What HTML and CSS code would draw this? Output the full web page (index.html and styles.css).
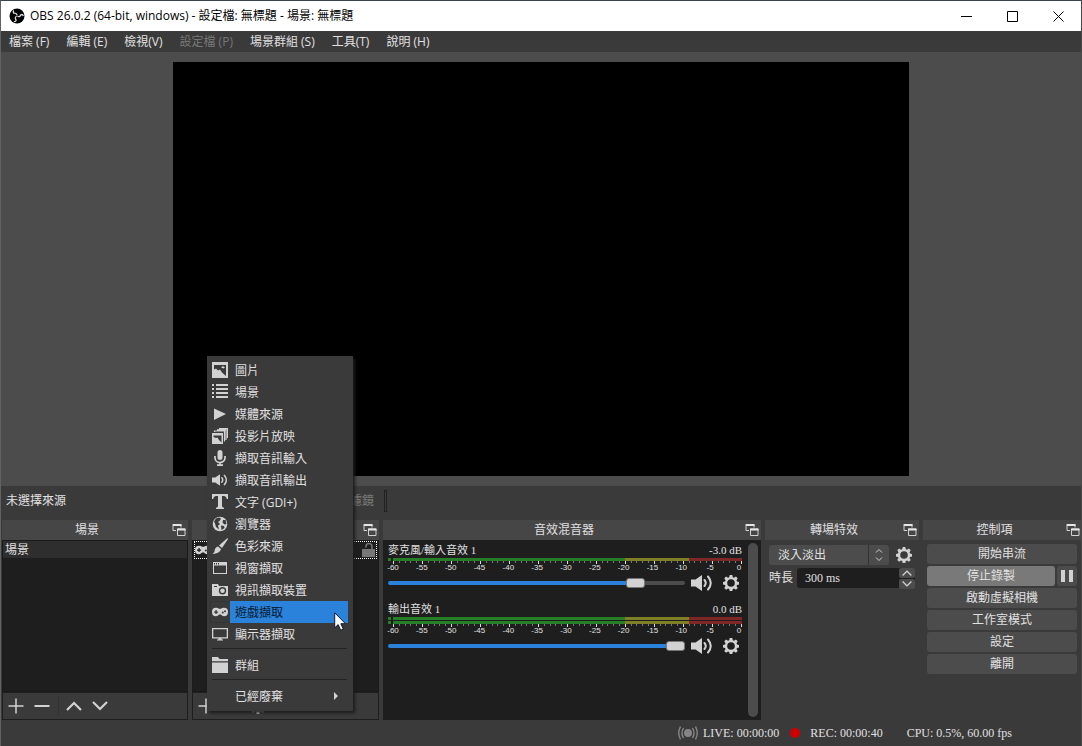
FILE: index.html
```html
<!DOCTYPE html>
<html lang="zh-Hant">
<head>
<meta charset="utf-8">
<title>OBS 26.0.2</title>
<link rel="stylesheet" href="styles.css">
</head>
<body>
<svg class="sprite" aria-hidden="true">
  <symbol id="popout" viewBox="0 0 14 14"><path d="M1 1.500h8v3M1 1v6.500h3M5.500 6h7.500v6.500H5.500z" fill="none" stroke="#d2d2d2"/><path d="M1 1h8.500v2H1zM5 5.500h8.500v2H5z" fill="#e6e6e6"/></symbol>
  <symbol id="gear" viewBox="0 0 16 16"><path fill-rule="evenodd" d="M6.700 0h2.600l.5 2.200 1.200.5 1.900-1.200 1.800 1.800-1.200 1.900.5 1.300 2 .4v2.500l-2 .5-.5 1.200 1.200 1.900-1.800 1.800-1.900-1.200-1.200.5-.5 2H6.700l-.5-2-1.200-.5-1.900 1.200-1.800-1.800 1.200-1.900-.5-1.200-2-.5V6.900l2-.4.5-1.300-1.200-1.900 1.800-1.800L5 2.700l1.200-.5zM8 4.200a3.800 3.800 0 1 0 0 7.600 3.800 3.800 0 0 0 0-7.600z"/></symbol>
  <symbol id="speaker" viewBox="0 0 22 16"><path d="M0 4.500h4.500L11 0v16l-6.500-4.500H0z"/><path d="M13.500 5q2.500 3 0 6M17 1.500q5.500 6.500 0 13" fill="none" stroke="#d2d2d2" stroke-width="2" stroke-linecap="round"/></symbol>
  <symbol id="pad" viewBox="0 0 16 16"><path fill-rule="evenodd" d="M4 3.800q2 0 3 1h2q1-1 3-1a4 4.200 0 0 1 0 8.400q-2 0-3-1.700H7q-1 1.700-3 1.700a4 4.200 0 0 1 0-8.400zM3.400 6v1.400H2v1.300h1.400v1.400h1.300V8.700h1.400V7.400H4.700V6z"/><circle cx="10.800" cy="8.600" r="1" fill="#3a3a3a"/><circle cx="13" cy="7.200" r="1" fill="#3a3a3a"/></symbol>
  <symbol id="plus" viewBox="0 0 16 16"><path d="M8 .5v15M.5 8h15" fill="none" stroke="#d2d2d2" stroke-width="1.500"/></symbol>
  <symbol id="minus" viewBox="0 0 16 16"><path d="M.5 8h15" fill="none" stroke="#d2d2d2" stroke-width="2"/></symbol>
  <symbol id="up" viewBox="0 0 16 16"><path d="M1 12l7-7 7 7" fill="none" stroke="#d2d2d2" stroke-width="2.200"/></symbol>
  <symbol id="down" viewBox="0 0 16 16"><path d="M1 4l7 7 7-7" fill="none" stroke="#d2d2d2" stroke-width="2.200"/></symbol>
</svg>

<div class="window">
  <header class="titlebar">
    <svg class="logo" viewBox="0 0 16 16"><circle cx="8" cy="8" r="7.500" fill="#000"/><g fill="none" stroke="#ddd" stroke-width="1.300"><path id="blade" d="M8 7.500C8 5.500 6.500 5 4.800 5.200 4 4.500 4 3.500 4.800 2.500"/><use href="#blade" transform="rotate(120 8 8)"/><use href="#blade" transform="rotate(240 8 8)"/></g></svg>
    <span class="title">OBS 26.0.2 (64-bit, windows) - 設定檔: 無標題 - 場景: 無標題</span>
    <button class="winbtn" aria-label="最小化"><svg viewBox="0 0 11 11"><path d="M0 5.500h11"/></svg></button>
    <button class="winbtn" aria-label="最大化"><svg viewBox="0 0 11 11"><path d="M.5.5h10v10H.5z"/></svg></button>
    <button class="winbtn" aria-label="關閉"><svg viewBox="0 0 11 11"><path d="M.5.5l10 10M10.500.5l-10 10"/></svg></button>
  </header>

  <nav class="menubar">
    <button>檔案 (F)</button><button>編輯 (E)</button><button>檢視(V)</button><button disabled>設定檔 (P)</button><button>場景群組 (S)</button><button>工具(T)</button><button>說明 (H)</button>
  </nav>

  <main class="preview"><div class="canvas"></div></main>

  <div class="context">
    <span class="none">未選擇來源</span>
    <button class="filter" disabled>濾鏡</button>
    <span class="grip"></span>
  </div>

  <div class="docks">
    <section class="dock scenes">
      <h2><span>場景</span><button class="pop" aria-label="浮動場景"><svg><use href="#popout"/></svg></button></h2>
      <div class="list"><button class="scene">場景</button></div>
      <div class="tools">
        <button aria-label="新增場景"><svg><use href="#plus"/></svg></button>
        <button aria-label="移除場景"><svg><use href="#minus"/></svg></button>
        <span class="bar"></span>
        <button aria-label="場景上移"><svg><use href="#up"/></svg></button>
        <button aria-label="場景下移"><svg><use href="#down"/></svg></button>
      </div>
    </section>

    <section class="dock sources">
      <h2><span></span><button class="pop" aria-label="浮動來源"><svg><use href="#popout"/></svg></button></h2>
      <div class="list">
        <div class="source">
          <svg class="kind" viewBox="0 0 16 16"><use href="#pad"/></svg>
          <svg class="eye" viewBox="0 0 16 16"><path d="M0 8q8-9 16 0-8 9-16 0z"/></svg>
          <svg class="lock" viewBox="0 0 14 14"><path d="M0 6h13v8H0z"/><path d="M4 4.500V3.500a3 3 0 0 1 6 0V7" fill="none" stroke="#777" stroke-width="1.500"/></svg>
        </div>
      </div>
      <div class="tools">
        <button aria-label="新增來源"><svg><use href="#plus"/></svg></button>
        <button aria-label="移除來源"><svg><use href="#minus"/></svg></button>
        <button aria-label="來源屬性"><svg viewBox="0 0 16 16"><use href="#gear"/></svg></button>
      </div>

      <div class="popup" role="menu">
        <button role="menuitem"><svg viewBox="0 0 16 16"><path d="M0 0h16v16H0z"/><path d="M2 3h12v11L10 10.500 8 7.500 6 8.500 4 6.500 2 7.500z" fill="#3a3a3a"/><path d="M9 5.500l2-1.500 2 1.500-1.500 1z"/></svg><span>圖片</span></button>
        <button role="menuitem"><svg viewBox="0 0 16 16"><path d="M0 0h2v2H0zM4 0h12v2H4zM0 4h2v2H0zM4 4h12v2H4zM0 8h2v2H0zM4 8h12v2H4zM0 12h2v2H0zM4 12h12v2H4z"/></svg><span>場景</span></button>
        <button role="menuitem"><svg viewBox="0 0 16 16"><path d="M2 2.500l12 5.500-12 6z"/></svg><span>媒體來源</span></button>
        <button role="menuitem"><svg viewBox="0 0 16 16"><path d="M0 5h11v11H0z"/><path d="M2.500 4V3h10v10H12M5 1.800h9V12M7 .6h8.500V10" fill="none" stroke="#d2d2d2" stroke-width="1.200"/><path d="M1.500 7.500h8v7L7 12l-1.500-2.500L4 10l-2.500-1z" fill="#3a3a3a"/></svg><span>投影片放映</span></button>
        <button role="menuitem"><svg viewBox="0 0 16 16"><rect x="5.500" y="0" width="5" height="10" rx="2.500"/><path d="M3 6v2a5 4.500 0 0 0 10 0V6M8 12v3M5 15.200h6" fill="none" stroke="#d2d2d2" stroke-width="1.700"/></svg><span>擷取音訊輸入</span></button>
        <button role="menuitem"><svg viewBox="0 0 22 16"><use href="#speaker"/></svg><span>擷取音訊輸出</span></button>
        <button role="menuitem"><svg viewBox="0 0 16 16"><path d="M0 0h16v5h-1.200q-.6-3-3-3H10v10q0 1.500 2 1.800V15H4v-1.200q2-.3 2-1.800V2H4.200q-2.400 0-3 3H0z"/></svg><span>文字 (GDI+)</span></button>
        <button role="menuitem"><svg viewBox="0 0 16 16"><circle cx="8" cy="8" r="7.300"/><path d="M7 1.500l2 1-1 2-2 1.500 2 2-2 1.500 1 4-3-2.500-1-3.500-1-2 2-3zM11 4l2.500 0 1 4-2 .5-2-2zM9 9.500l3 .5.5 2-3 2z" fill="#3a3a3a"/></svg><span>瀏覽器</span></button>
        <button role="menuitem"><svg viewBox="0 0 16 16"><path d="M15.500 0l.5 1-6 9-3-2.500zM6 8.500L9 11q-1 4.500-8.500 5Q3 14 3 11q1-2.500 3-2.500z"/></svg><span>色彩來源</span></button>
        <button role="menuitem"><svg viewBox="0 0 16 16"><path fill-rule="evenodd" d="M1 2h14v12H1zM2 5.500V13h12V5.500zM2 3v1.500h1V3zM4 3v1.500h1V3zM6 3v1.500h1V3z"/></svg><span>視窗擷取</span></button>
        <button role="menuitem"><svg viewBox="0 0 16 16"><path d="M0 2h6l1 2h9v10H0z"/><circle cx="10.500" cy="8.800" r="3" fill="none" stroke="#3a3a3a" stroke-width="1.400"/><path d="M2 4h3v1H2z" fill="#3a3a3a"/></svg><span>視訊擷取裝置</span></button>
        <button role="menuitem" class="active"><svg viewBox="0 0 16 16"><use href="#pad"/></svg><span>遊戲擷取</span>
          <svg class="cursor" viewBox="0 0 12 19"><path d="M.7.8v15l3.500-3.200L6.700 18.300l2.600-1.200-2.400-5.400h4.600z" fill="#fff" stroke="#101830"/></svg></button>
        <button role="menuitem"><svg viewBox="0 0 16 16"><path fill-rule="evenodd" d="M0 2h16v10.500H9.500V13.500H11v1H5v-1h1.500v-1H0zM1.300 3.300v7.900h13.400V3.300z"/></svg><span>顯示器擷取</span></button>
        <hr>
        <button role="menuitem"><svg viewBox="0 0 16 16"><path d="M0 0h6l1.500 2H16v2.200H0zM0 5.500h16V16H0z"/></svg><span>群組</span></button>
        <hr>
        <button role="menuitem"><svg></svg><span>已經廢棄</span><svg class="more" viewBox="0 0 4 8"><path d="M0 0l4 4-4 4z"/></svg></button>
      </div>
    </section>

    <section class="dock mixer">
      <h2><span>音效混音器</span><button class="pop" aria-label="浮動混音器"><svg><use href="#popout"/></svg></button></h2>
      <div class="list mixlist">
        <div class="channels">
          <div class="channel">
            <div class="name"><label for="mic">麥克風/輸入音效 1</label><span>-3.0 dB</span></div>
            <div class="meter"></div>
            <div class="ticks"></div><div class="scale"></div>
            <div class="fader"><input id="mic" type="range" min="0" max="1000" value="856" style="--fill:86%"><button aria-label="靜音"><svg class="spk" viewBox="0 0 22 16"><use href="#speaker"/></svg></button><button aria-label="音效設定"><svg class="cog" viewBox="0 0 16 16"><use href="#gear"/></svg></button></div>
          </div>
          <div class="channel">
            <div class="name"><label for="out">輸出音效 1</label><span>0.0 dB</span></div>
            <div class="meter"></div><div class="meter second"></div>
            <div class="ticks"></div><div class="scale"></div>
            <div class="fader"><input id="out" type="range" min="0" max="1000" value="1000" style="--fill:100%"><button aria-label="靜音"><svg class="spk" viewBox="0 0 22 16"><use href="#speaker"/></svg></button><button aria-label="音效設定"><svg class="cog" viewBox="0 0 16 16"><use href="#gear"/></svg></button></div>
          </div>
        </div>
        <div class="scroll"></div>
      </div>
    </section>

    <section class="dock transitions">
      <h2><span>轉場特效</span><button class="pop" aria-label="浮動轉場"><svg><use href="#popout"/></svg></button></h2>
      <div class="form">
        <div class="row">
          <div class="pick"><select aria-label="轉場特效"><option>淡入淡出</option></select><svg class="arrows" viewBox="0 0 8 12"><path d="M1 3.500l3-3 3 3M1 8.500l3 3 3-3"/></svg></div>
          <button class="plain" aria-label="轉場設定"><svg class="cog" viewBox="0 0 16 16"><use href="#gear"/></svg></button>
        </div>
        <div class="row duration">
          <label for="dur">時長</label>
          <div class="spin"><input id="dur" type="text" value="300 ms"><div class="steps"><button aria-label="增加"><svg viewBox="0 0 16 16"><use href="#up"/></svg></button><button aria-label="減少"><svg viewBox="0 0 16 16"><use href="#down"/></svg></button></div></div>
        </div>
      </div>
    </section>

    <section class="dock controls">
      <h2><span>控制項</span><button class="pop" aria-label="浮動控制項"><svg><use href="#popout"/></svg></button></h2>
      <div class="buttons">
        <button>開始串流</button>
        <div class="rec"><button class="on">停止錄製</button><button class="pause" aria-label="暫停錄製"><svg viewBox="0 0 12 12"><path d="M0 0h4v12H0zM8 0h4v12H8z"/></svg></button></div>
        <button>啟動虛擬相機</button>
        <button>工作室模式</button>
        <button>設定</button>
        <button>離開</button>
      </div>
    </section>
  </div>

  <footer class="status">
    <svg class="live" viewBox="0 0 20 14"><circle cx="10" cy="7" r="4"/><path d="M5.500 2q-3 5 0 10M14.500 2q3 5 0 10M2.500.5q-3.500 6.500 0 13M17.500.5q3.500 6.500 0 13" fill="none" stroke="#858585" stroke-width="1.400"/></svg>
    <span>LIVE: 00:00:00</span>
    <span class="dot"></span>
    <span class="rectime">REC: 00:00:40</span>
    <span>CPU: 0.5%, 60.00 fps</span>
  </footer>
</div>
<script src="meters.js"></script>
</body>
</html>
```

FILE: styles.css
```css
* { box-sizing: border-box; }
body {
  margin: 0;
  background: #3a3a3a;
  color: #e1e0e1;
  font: 12px/16px "Open Sans", "Noto Sans CJK TC", sans-serif;
}
button, input, select {
  margin: 0;
  padding: 0;
  border: 0;
  background: none;
  color: inherit;
  font: inherit;
}
svg { display: block; fill: #d2d2d2; }
.sprite { position: absolute; width: 0; height: 0; }
.window {
  display: flex;
  flex-direction: column;
  min-height: 100vh;
  border-top: 1px solid #3c434c;
  border-left: 1px solid #626262;
  border-right: 1px solid #4a4a4a;
}

.titlebar {
  display: flex;
  align-items: center;
  height: 30px;
  padding-left: 8px;
  background: #fff;
  color: #000;
}
.logo { width: 16px; height: 16px; margin-right: 5px; }
.title { flex: 1; white-space: nowrap; }
.winbtn { display: grid; place-items: center; width: 46px; height: 30px; }
.winbtn svg { width: 11px; height: 11px; fill: none; stroke: #000; }

.menubar { display: flex; height: 21px; gap: 17px; padding: 0 8px; }
.menubar button { white-space: nowrap; }
.menubar button:disabled { color: #777; }

.preview {
  display: flex;
  flex: 1;
  align-items: center;
  justify-content: center;
  padding: 10px;
  background: #4c4c4c;
}
.canvas { width: 69.400%; aspect-ratio: 16 / 9; background: #000; }

.context { display: flex; align-items: center; height: 34px; padding: 0 0 4px 5px; }
.none { width: 344px; }
.filter:disabled { color: #7a7a7a; }
.grip { width: 3px; height: 22px; margin-left: 10px; border: 1px solid #222; }

.docks { display: flex; gap: 4px; height: 200px; padding-left: 1px; }
.dock { display: flex; flex-direction: column; min-width: 0; position: relative; }
.scenes { flex: 186 1 0; }
.sources { flex: 187 1 0; }
.mixer { flex: 378 1 0; }
.transitions { flex: 154 1 0; }
.controls { flex: 158 1 0; }
h2 {
  display: flex;
  align-items: center;
  flex: none;
  height: 20px;
  margin: 0;
  padding-right: 2px;
  background: #464646;
  font: inherit;
  text-align: center;
}
h2 span { flex: 1; }
.controls h2 { padding-right: 1px; }
.pop svg { width: 14px; height: 14px; }
.list { flex: 1; background: #1e1e1e; border: 1px solid #1a1a1a; }
.scene { display: block; width: 100%; height: 17px; padding-left: 2px; background: #2e2e2e; text-align: left; }
.tools {
  display: flex;
  align-items: center;
  gap: 10px;
  height: 28px;
  padding-left: 5px;
  border: 1px solid #1e1e1e;
}
.tools svg { width: 16px; height: 16px; }
.bar { width: 1px; height: 20px; background: #333; margin: 0 -3px 0 -2px; }
.source { display: flex; align-items: center; height: 18px; margin: 0 1px; border: 1px dotted #fff; }
.kind { width: 16px; height: 16px; }
.eye { width: 14px; height: 14px; margin-left: auto; fill: #aaa; }
.lock { width: 14px; height: 14px; margin-left: 8px; fill: #777; }

.popup {
  position: absolute;
  left: 15px;
  bottom: 9px;
  z-index: 2;
  width: 146px;
  padding: 3px 5px 4px 3px;
  background: #3a3a3a;
  box-shadow: 2px 2px 3px #1c1c1c;
}
.popup button {
  display: flex;
  align-items: center;
  position: relative;
  width: 100%;
  height: 22px;
  text-align: left;
  white-space: nowrap;
}
.popup svg { flex: none; width: 16px; height: 16px; margin: 0 2px; }
.popup span { flex: 1; height: 22px; padding: 2px 0 0 5px; line-height: 20px; }
.popup .active span { background: #2a82da; color: #06182c; }
.popup .active { box-shadow: inset 0 0 0 1px #333; }
.popup .cursor { position: absolute; left: 122px; top: 11px; width: 12px; height: 19px; }
.popup .more { width: 4px; height: 8px; margin-right: 10px; }
.popup hr { height: 1px; margin: 3px 1px 5px 2px; border: 0; background: #242424; }

.mixlist { display: flex; padding: 1px 2px 1px 4px; border: 0; }
.channels { flex: 1; padding-left: 1px; }
.channel { margin-bottom: 6px; }
.name {
  display: flex;
  justify-content: space-between;
  height: 17px;
  font: 11px/18px "Liberation Serif", "Noto Sans CJK TC", serif;
}
.meter {
  height: 3px;
  background:
    linear-gradient(90deg, transparent 3px, #1e1e1e 3px, #1e1e1e 5px, transparent 5px),
    linear-gradient(90deg, #267f26 67%, #7f7f26 67%, #7f7f26 85%, #7f2626 85%);
}
.second { margin-top: 1px; }
.ticks { display: flex; justify-content: space-between; height: 3px; padding-left: 5px; }
.ticks i { width: 1px; height: 2px; background: #777; }
.ticks i.major { height: 3px; background: #ddd; }
.scale { display: flex; justify-content: space-between; height: 8px; padding: 0 3px 0 5px; font: 8px/8px "Liberation Sans", sans-serif; }
.scale span { display: flex; justify-content: center; width: 0; }
.fader { display: flex; align-items: center; height: 22px; }
.fader input { flex: 1; min-width: 0; height: 10px; appearance: none; }
.fader input::-webkit-slider-runnable-track {
  height: 4px;
  border-radius: 2px;
  background: linear-gradient(90deg, #2a82da var(--fill), #4c4c4c var(--fill));
}
.fader input::-webkit-slider-thumb {
  appearance: none;
  width: 19px;
  height: 10px;
  margin-top: -3px;
  border: 1px solid #777;
  border-radius: 3px;
  background: #d2d2d2;
}
.spk { width: 22px; height: 16px; margin-left: 6px; }
.cog { width: 16px; height: 16px; }
.fader .cog { margin: 0 3px 0 10px; }
.scroll { width: 10px; margin: 2px 1px 2px 6px; border-radius: 5px; background: #4c4c4c; }

.form { display: flex; flex-direction: column; gap: 3px; padding: 5px 4px; }
.row { display: flex; align-items: center; height: 20px; }
.pick { display: flex; flex: 1; align-items: center; height: 20px; border-radius: 3px; background: #4c4c4c; }
.pick select { flex: 1; height: 20px; padding-left: 9px; appearance: none; border-right: 1px solid #333; }
.arrows { width: 8px; height: 12px; margin: 0 6px; fill: none; stroke: #d2d2d2; }
.plain { margin: 0 3px 0 7px; }
.duration { gap: 4px; }
.spin { display: flex; flex: 1; height: 20px; border-radius: 3px; background: #1e1e1e; font-family: "Liberation Serif", serif; }
.spin input { flex: 1; width: 0; padding-left: 8px; }
.steps { display: grid; gap: 1px; width: 16px; }
.steps button { display: grid; place-items: center; border-radius: 2px; background: #4c4c4c; }
.steps svg { width: 12px; height: 10px; }

.buttons { display: flex; flex-direction: column; gap: 2px; padding: 4px 4px 0; }
.buttons button { height: 20px; border-radius: 3px; background: #4c4c4c; }
.rec { display: flex; gap: 2px; }
.buttons .on { flex: 1; background: #797979; }
.buttons .pause { display: grid; place-items: center; width: 20px; }
.pause svg { width: 12px; height: 12px; }

.status {
  display: flex;
  align-items: center;
  justify-content: flex-end;
  height: 26px;
  padding-right: 69px;
  font-family: "Liberation Serif", serif;
}
.live { width: 20px; height: 14px; margin-right: 5px; fill: #858585; }
.dot { width: 10px; height: 10px; margin: 0 10px 0 11px; border-radius: 5px; background: #d00000; }
.rectime { margin-right: 24px; }
```

FILE: meters.js
```js
document.querySelectorAll('.ticks').forEach(function (row) {
  for (var db = -60; db <= 0; db++) {
    var tick = document.createElement('i');
    if (db % 5 === 0) tick.className = 'major';
    row.appendChild(tick);
  }
});
document.querySelectorAll('.scale').forEach(function (row) {
  for (var db = -60; db <= 0; db += 5) {
    var mark = document.createElement('span');
    mark.textContent = db;
    row.appendChild(mark);
  }
});
```
